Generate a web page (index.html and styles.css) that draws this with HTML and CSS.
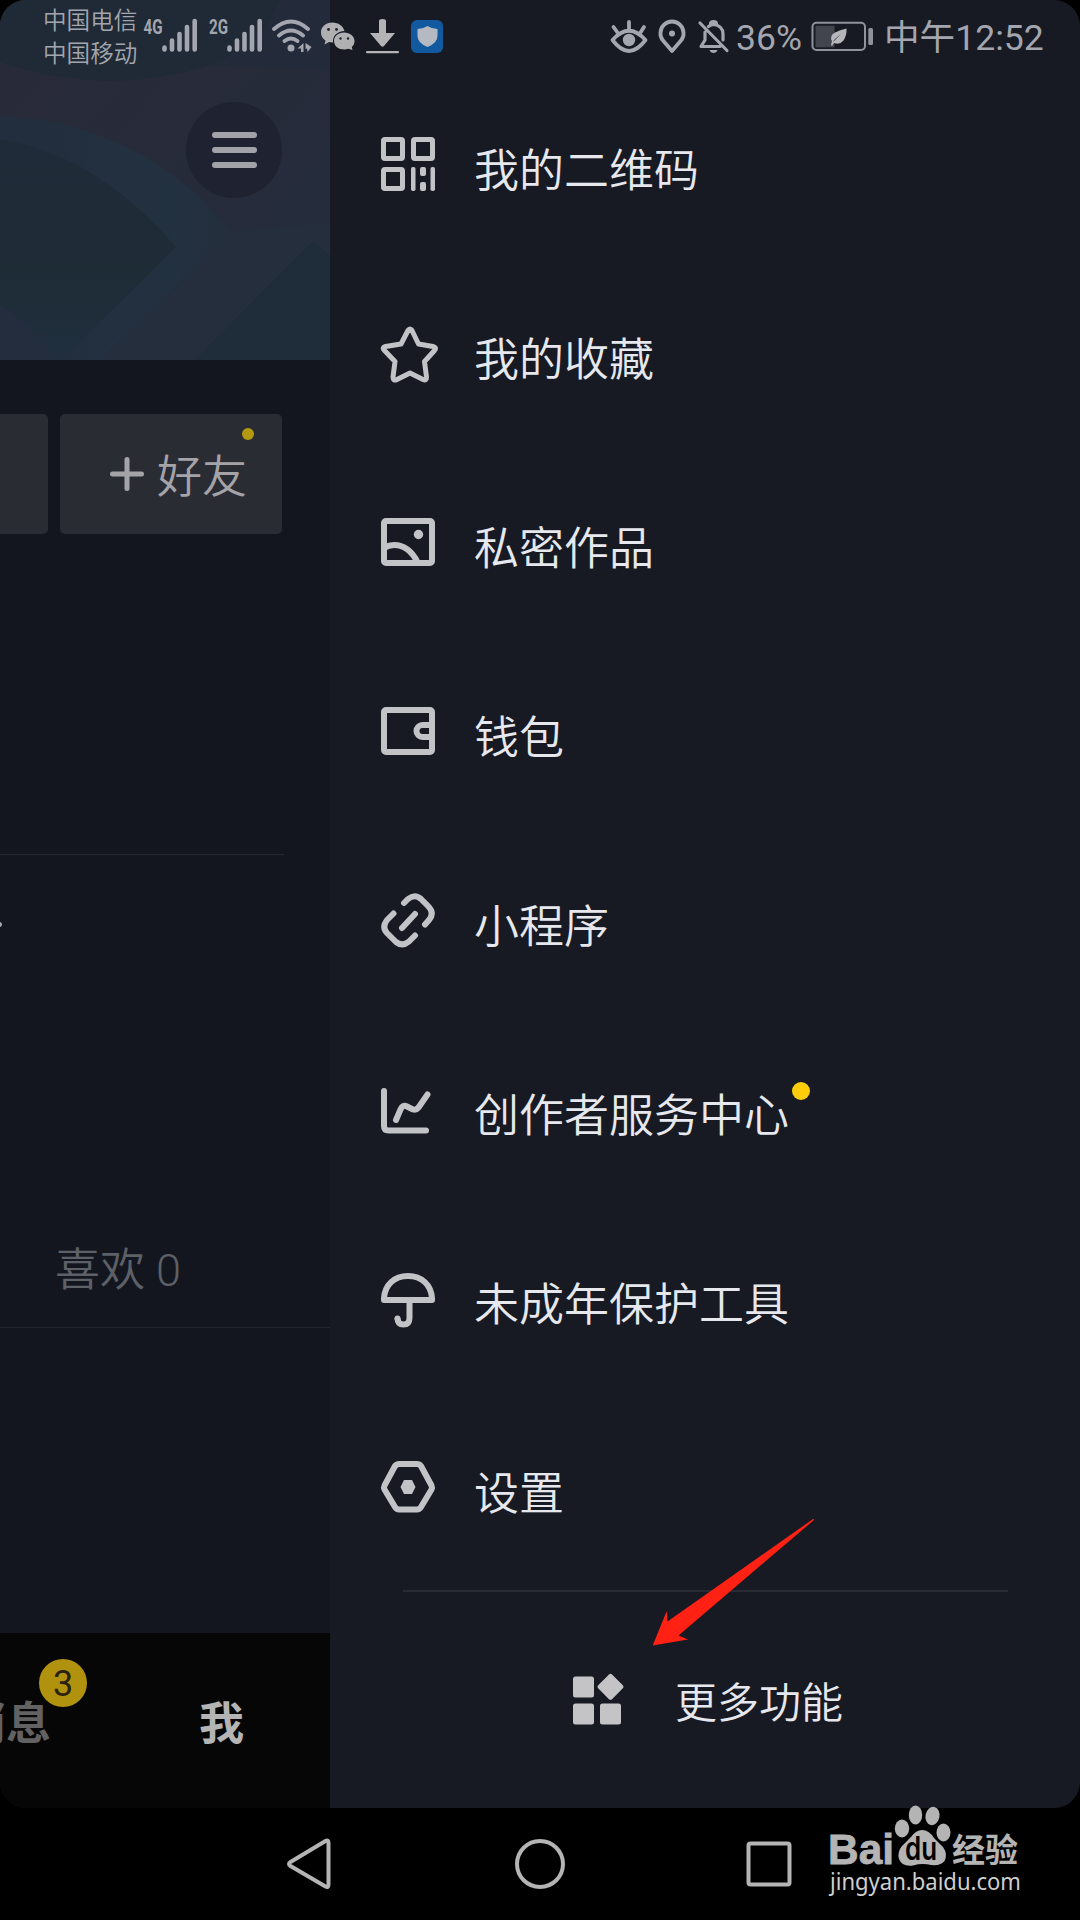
FILE: index.html
```html
<!DOCTYPE html>
<html lang="zh-CN">
<head>
<meta charset="utf-8">
<title>更多功能</title>
<link rel="stylesheet" href="styles.css">
</head>
<body>
<div class="screen">
  <div class="app">
    <header class="status">
      <div class="carriers"><span>中国电信</span><span>中国移动</span></div>
      <svg class="signal" viewBox="143 12 56 44"><text class="net" x="143.500" y="34" textLength="19" lengthAdjust="spacingAndGlyphs">4G</text><path class="bars" d="M164.500 47.500V49.500M172 40.500V49.500M179.500 34V49.500M187 27V49.500M194.700 21V49.500"/></svg>
      <svg class="signal second" viewBox="208 12 56 44"><text class="net" x="209" y="34" textLength="19" lengthAdjust="spacingAndGlyphs">2G</text><path class="bars" d="M229.500 47.500V49.500M237 40.500V49.500M244.500 34V49.500M252 27V49.500M259.700 21V49.500"/></svg>
      <svg class="wifi" viewBox="270 12 44 44"><path class="stroke" d="M274 29Q291 14 308 29M279 35.500Q291 25.500 303 35.500M284.500 41Q291 36 297.500 41"/><circle cx="291" cy="48" r="3.500"/><path d="M303.500 43V52H301V48.500H297.500ZM305.500 43L311.500 47L307.500 52L307 48.500L305.500 49Z"/></svg>
      <svg class="wechat" viewBox="320 12 36 44"><path d="M332.500 22.500C325.500 22.500 321 27 321 32.500C321 36 322.800 38.800 325.500 40.500L324.500 44.500L329 42Q331 42.600 333 42.400C332.500 35.500 337.500 31.200 344.500 31C343 26 338.500 22.500 332.500 22.500Z"/><path d="M344 32.500C338 32.500 334 36.300 334 41C334 46 338.500 49.500 344.500 49.500Q346.500 49.500 348.500 48.800L352.500 50L351.800 47C353.500 45.500 354.500 43.500 354.500 41C354.500 36.300 350 32.500 344 32.500Z"/><g class="eyes"><circle cx="328.500" cy="29.500" r="1.400"/><circle cx="336.500" cy="29.500" r="1.400"/><circle cx="340.500" cy="38.500" r="1.200"/><circle cx="348" cy="38.500" r="1.200"/></g></svg>
      <svg class="download" viewBox="365 12 36 44"><path d="M379 21Q379 19 382.500 19T386 21V33H395L384 46Q382.500 47.500 381 46L370 33H379Z"/><rect x="366" y="51" width="33" height="2.200" rx="1"/></svg>
      <svg class="guard" viewBox="410 12 34 44"><rect class="tile" x="411" y="20" width="32" height="33" rx="6"/><path d="M427.500 26Q432 29 437.500 29V36Q437.500 43 427.500 47Q417.500 43 417.500 36V29Q423 29 427.500 26Z"/></svg>
      <svg class="eye" viewBox="610 12 38 44"><path class="stroke" d="M612.500 40Q629 21.500 645.500 40Q629 62 612.500 40ZM629 22V29M613.500 27L617.500 32.500M644 27L640.500 32.500"/><circle cx="629" cy="40" r="6.200"/></svg>
      <svg class="pin" viewBox="657 12 30 44"><path class="stroke" d="M672 51L663 40.500C660 37 660.500 33 660.500 33A11.500 11.500 0 0 1 683.500 33C683.500 33 684 37 681 40.500Z"/><circle cx="672" cy="33.500" r="3"/></svg>
      <svg class="bell" viewBox="697 12 34 44"><path class="stroke thin" d="M700 23L727 50.500M705 32V40L701 46.500H720M708.500 26.500Q711 24.500 713.500 24.500Q723 25.500 723 34V40M710.500 24Q710.500 21.500 713.500 21.500T716.500 24"/><path d="M709.500 50H717.500Q716.500 53 713.500 53T709.500 50Z"/></svg>
      <span class="percent">36%</span>
      <svg class="battery" viewBox="811 12 64 44"><rect class="case" x="812.500" y="22.800" width="52.500" height="27.200" rx="4"/><rect class="level" x="815.500" y="25.800" width="19" height="21.500"/><path class="leaf" d="M831 45L832 41Q829 36 835 32.500Q840 30 846.500 28.500Q847 35 843.500 40.500Q839.500 45.500 834 43L832 46ZM833 42L841 34L834 40Z"/><rect class="cap" x="868.300" y="28" width="4.700" height="17" rx="1.500"/></svg>
      <span class="clock">中午12:52</span>
    </header>

    <main class="profile">
      <section class="cover">
        <svg class="art" viewBox="0 0 330 360">
          <defs>
            <linearGradient id="base" x1="0" y1="0" x2="1" y2="1"><stop offset="0" stop-color="#292a38"/><stop offset=".55" stop-color="#262b3a"/><stop offset="1" stop-color="#242e3d"/></linearGradient>
            <linearGradient id="disc" x1="0" y1="0" x2="0" y2="1"><stop offset="0" stop-color="#202b39"/><stop offset=".6" stop-color="#1e2c36"/><stop offset="1" stop-color="#202f3e"/></linearGradient>
            <linearGradient id="edge" x1="0" y1="0" x2="1" y2="0"><stop offset="0" stop-color="#222d3d"/><stop offset=".7" stop-color="#223140"/><stop offset="1" stop-color="#242e3d"/></linearGradient>
          </defs>
          <rect width="330" height="360" fill="url(#base)"/>
          <path d="M0 0H280Q270 45 210 65Q150 84 90 80Q40 76 0 62Z" fill="#1f2a36"/>
          <path d="M280 0H330V70L210 65Q262 45 280 0Z" fill="#232b3a"/>
          <path d="M0 116Q75 118 145 157Q195 187 232 232L105 360H0Z" fill="url(#edge)"/>
          <path d="M165 296L232 232L330 222V360H100Z" fill="#242e3d"/>
          <path d="M0 139Q58 149 105 182Q145 210 176 247L62 360H0Z" fill="url(#disc)"/>
          <path d="M313 241L330 256V360H195Z" fill="#1f2d3a"/>
          <path d="M0 305Q30 324 56 360H0Z" fill="#242d3e"/>
        </svg>
        <div class="menu-button"><i></i><i></i><i></i></div>
      </section>
      <section class="actions">
        <div class="button cut"></div>
        <div class="button friend">
          <svg class="plus" viewBox="0 0 34 34"><path d="M17 2.500V31.500M2.500 17H31.500"/></svg>
          <span>好友</span><b class="dot"></b>
        </div>
      </section>
      <section class="bio"><i class="period"></i></section>
      <section class="tabs"><span>喜欢 0</span></section>
      <nav class="bottom-tabs">
        <div class="messages">消息<b class="badge">3</b></div>
        <div class="me">我</div>
      </nav>
    </main>

    <aside class="drawer">
      <ul class="menu">
        <li><svg class="icon" viewBox="0 0 60 60"><g class="line w5"><rect x="5.500" y="5.500" width="19" height="19" rx="1.500"/><rect x="35.500" y="5.500" width="19" height="19" rx="1.500"/><rect x="5.500" y="35.500" width="19" height="19" rx="1.500"/></g><g class="fill"><rect x="33" y="33" width="4.500" height="24" rx="1.800"/><rect x="52.500" y="33" width="4.500" height="24" rx="1.800"/><rect x="42" y="33" width="6" height="9" rx="2"/><rect x="42" y="48" width="6" height="9" rx="2"/></g></svg><span>我的二维码</span></li>
        <li><svg class="icon" viewBox="0 0 60 60"><path class="line w5" d="M30 7.500Q32 4.500 34 7.500L40.500 21L55 23.500Q59 24.500 56.500 27.500L46.500 38.500L48.500 54Q48.500 58 45 56.500L32 50L19 56.500Q15 58.500 15 54L17 38.500L6.500 27.500Q3.500 24.500 7.500 23.500L23 21Z"/></svg><span>我的收藏</span></li>
        <li><svg class="icon" viewBox="0 0 60 60"><rect class="line w6" x="6" y="9" width="48" height="42" rx="2"/><path class="line w6" d="M6 36Q11 33 16 33C26 33 34 39 40 51"/><circle class="fill" cx="40.500" cy="22.500" r="4.700"/></svg><span>私密作品</span></li>
        <li><svg class="icon" viewBox="0 0 60 60"><rect class="line w6" x="6" y="9" width="48" height="42" rx="2"/><path class="line w6" d="M54 27H44.500A6 6 0 0 0 44.500 39H54" transform="translate(0 -3)"/></svg><span>钱包</span></li>
        <li><svg class="icon" viewBox="0 0 60 60"><path class="line w6 round" d="M26 13L30 9Q37 3.500 43 9L50 16Q57 23 51 30L47 34.500M15.500 23.500L9 30Q3.500 37 9 43L18 52Q24.500 57 31 51.500L37 45.500M24 38L37 24"/></svg><span>小程序</span></li>
        <li><svg class="icon" viewBox="0 0 60 60"><path class="line w6 round" d="M6 12V47Q6 51.500 10.500 51.500H48M18 41L22.500 30.500Q25 25 29 27.500L35 30.500Q38 31.500 40.500 28.500L49.500 15.500"/></svg><span>创作者服务中心<b class="dot"></b></span></li>
        <li><svg class="icon" viewBox="0 0 60 60"><g transform="translate(0 2)"><path class="line w6" d="M6 30V28C7 15 16 6 30 6S53 15 54 28V30ZM31.500 30V48Q31.500 54.500 25.500 54.500T19.500 48"/><circle class="fill" cx="19.500" cy="48.500" r="3"/></g></svg><span>未成年保护工具</span></li>
        <li><svg class="icon" viewBox="0 0 60 60"><path class="line w6" d="M19 7.500Q20 7 21 7H39Q41.500 7 43 9L53.500 28.500Q54.500 30.500 53.500 32.500L43 50Q41.500 52.500 39 52.500H21Q18.500 52.500 17 50L6.500 32.500Q5.500 30.500 6.500 28.500L17 9Z"/><path class="fill" d="M26 23H34L37.500 30L34 37H26L22.500 30Z"/></svg><span>设置</span></li>
      </ul>
      <div class="more">
        <svg class="grid" viewBox="0 0 52 52"><g><rect x="0" y="3.500" width="21" height="21" rx="2.500"/><rect x="0" y="30.500" width="21" height="21" rx="2.500"/><rect x="27" y="30.500" width="21" height="21" rx="2.500"/><rect x="27.700" y="4" width="19.600" height="19.600" rx="2.500" transform="rotate(45 37.500 13.800)"/></g></svg>
        <span>更多功能</span>
      </div>
    </aside>
  </div>

  <nav class="system-nav">
    <svg viewBox="0 0 60 60"><path d="M45.500 7Q48.500 5.500 48.500 9V50.500Q48.500 54 45.500 52.500L10.500 32Q7.500 30 10.500 28Z"/></svg>
    <svg viewBox="0 0 60 60"><circle cx="30" cy="30" r="23"/></svg>
    <svg viewBox="0 0 60 60"><rect x="8.500" y="9.500" width="41" height="41" rx="2"/></svg>
  </nav>

  <svg class="arrow" viewBox="650 1515 170 135"><path d="M652.700 1645.500L666.700 1611L667.500 1621.500L813 1519Q814.500 1518.500 814 1520L678.500 1635.500L688 1639.500Z"/></svg>

  <svg class="watermark" viewBox="820 1800 210 105">
    <text class="brand" x="828" y="1864" textLength="66" lengthAdjust="spacingAndGlyphs">Bai</text>
    <ellipse cx="902" cy="1828.500" rx="7.200" ry="9"/><ellipse cx="915.500" cy="1815" rx="6.700" ry="9.500"/><ellipse cx="932.500" cy="1816" rx="7" ry="9.200" transform="rotate(12 932.500 1816)"/><ellipse cx="943.500" cy="1832.500" rx="7" ry="9"/>
    <path d="M922 1830Q929 1830 934 1838L943 1847Q948 1854 944.500 1861Q941 1866 931 1865Q922 1863 913 1865.500Q902 1867 899 1859Q897 1852 902 1846L911 1837Q916 1830 922 1830Z"/>
    <text class="du" x="905" y="1860" textLength="32" lengthAdjust="spacingAndGlyphs">du</text>
    <text class="cn" x="952" y="1862" textLength="66" lengthAdjust="spacingAndGlyphs">经验</text>
    <text class="url" x="830" y="1890" textLength="191" lengthAdjust="spacingAndGlyphs">jingyan.baidu.com</text>
  </svg>
</div>
</body>
</html>
```
FILE: styles.css
```css
* { box-sizing: border-box; }
body { margin: 0; background: #000; font-family: Roboto, "Noto Sans CJK SC", sans-serif; }
svg { display: block; flex: none; }
i, b { font-style: normal; font-weight: 400; }

.screen { position: relative; width: 1080px; height: 1920px; overflow: hidden; display: flex; flex-direction: column; }
.app { position: relative; display: flex; height: 1808px; border-radius: 26px; overflow: hidden; }

/* Status bar, laid over both panels */
.status { position: absolute; z-index: 2; top: 0; left: 0; width: 1080px; height: 72px; padding-left: 43px; display: flex; color: #a3a6ae; fill: #a3a6ae; }
.status svg { height: 44px; margin-top: 12px; }
.carriers { width: 100px; padding-top: 5px; display: flex; flex-direction: column; font-size: 23.6px; line-height: 33px; font-weight: 350; white-space: nowrap; }
.stroke { fill: none; stroke: #a3a6ae; stroke-width: 3.8; stroke-linecap: round; stroke-linejoin: round; }
.thin { stroke-width: 3.2; }
.signal { width: 56px; }
.second { margin-left: 9px; }
.net { font: 700 20px Roboto, sans-serif; }
.bars { fill: none; stroke: #a3a6ae; stroke-width: 4.6; stroke-linecap: round; }
.wifi { width: 44px; margin-left: 6px; }
.wechat { width: 36px; margin-left: 6px; fill: #b0b0b2; }
.eyes { fill: #22242d; }
.download { width: 36px; margin-left: 9px; fill: #b4b4b6; }
.guard { width: 34px; margin-left: 9px; fill: #b5b9c2; }
.tile { fill: #115a9f; }
.eye { width: 38px; margin-left: 166px; }
.pin { width: 30px; margin-left: 9px; }
.bell { width: 34px; margin-left: 10px; }
.percent { width: 75px; margin-left: 5px; font-size: 35.5px; line-height: 76px; white-space: nowrap; }
.battery { width: 64px; }
.case { fill: none; stroke: #8f929a; stroke-width: 2; }
.level { fill: #42454e; }
.cap { fill: #8f929a; }
.leaf { fill: #b4b6ba; fill-rule: evenodd; }
.clock { margin-left: 9px; font-size: 35.6px; line-height: 76px; white-space: nowrap; }

/* Profile page pushed to the left */
.profile { width: 330px; height: 1808px; background: #13161e; display: flex; flex-direction: column; overflow: hidden; flex: none; }
.cover { display: grid; height: 360px; flex: none; }
.art { grid-area: 1 / 1; width: 330px; height: 360px; }
.menu-button { grid-area: 1 / 1; width: 96px; height: 96px; margin: 102px 0 0 186px; border-radius: 50%; background: #1f2230; display: flex; flex-direction: column; align-items: center; justify-content: center; gap: 9px; }
.menu-button i { width: 45px; height: 6px; border-radius: 3px; background: #a2a3a9; }
.actions { display: flex; gap: 12px; margin-top: 54px; height: 120px; flex: none; }
.button { background: #2a2c34; border-radius: 5px; }
.cut { width: 48px; border-radius: 0 5px 5px 0; }
.friend { position: relative; width: 222px; display: flex; align-items: center; padding-left: 50px; color: #a4a3a8; font-size: 45px; font-weight: 350; }
.friend span { margin: 7px 0 0 13px; line-height: 60px; }
.plus { width: 34px; height: 34px; fill: none; stroke: #a4a3a8; stroke-width: 5; stroke-linecap: round; }
.dot { position: absolute; border-radius: 50%; }
.friend .dot { left: 182px; top: 14px; width: 12px; height: 12px; background: #b3990f; }
.bio { position: relative; width: 284px; height: 321px; flex: none; border-bottom: 1px solid #24272f; }
.period { position: absolute; left: -3px; top: 388px; width: 5px; height: 5px; border-radius: 50%; background: #a8aab0; }
.tabs { height: 473px; flex: none; border-bottom: 1px solid #22252d; display: flex; align-items: flex-end; padding: 0 0 23px 55px; color: #5d6067; font-size: 45px; line-height: 66px; font-weight: 350; }
.bottom-tabs { margin-top: auto; height: 175px; flex: none; background: #060606; display: flex; align-items: center; padding-top: 8px; font-size: 45px; font-weight: 700; line-height: 60px; }
.messages { position: relative; width: 90px; margin-left: -39px; color: #626262; white-space: nowrap; }
.me { margin-left: 148px; color: #b4b4b4; }
.badge { position: absolute; left: 78px; top: -36px; width: 48px; height: 48px; border-radius: 50%; background: #b1920f; color: #2a220f; font-size: 36px; line-height: 51px; text-align: center; }

/* Side drawer */
.drawer { flex: 1; background: #171a23; padding-top: 69px; display: flex; flex-direction: column; }
.menu { list-style: none; margin: 0; padding: 0 0 9px; }
.menu li { height: 189px; padding-left: 48px; display: flex; align-items: center; color: #e6e8ee; font-size: 45px; font-weight: 350; }
.menu span { position: relative; margin: 16px 0 0 36px; line-height: 66px; white-space: nowrap; }
.icon { width: 60px; height: 60px; }
.menu .dot { left: 318px; top: -2px; width: 18px; height: 18px; background: #fdcd0b; }
.line { fill: none; stroke: #c1c3c6; stroke-linejoin: round; }
.fill { fill: #c1c3c6; }
.w5 { stroke-width: 5; }
.w6 { stroke-width: 6; }
.round { stroke-linecap: round; }
.more { margin: 0 72px 0 73px; border-top: 2px solid #282b33; padding: 77px 0 0 170px; height: 139px; display: flex; align-items: center; color: #e6e8ee; font-size: 42px; line-height: 60px; font-weight: 350; }
.grid { width: 52px; height: 52px; fill: #c4c4c6; }
.more span { margin: 9px 0 0 50px; }

.system-nav { height: 112px; background: #000; display: flex; align-items: center; gap: 170px; padding-left: 280px; }
.system-nav svg { width: 60px; height: 60px; fill: none; stroke: #b4b4b4; stroke-width: 4; stroke-linejoin: round; }

/* Annotation and site mark, over the page */
.arrow { position: absolute; left: 650px; top: 1515px; width: 170px; height: 135px; fill: #ff2113; }
.watermark { position: absolute; left: 820px; top: 1800px; width: 210px; height: 105px; fill: #b4b4b4; }
.brand { font: 700 42px "Liberation Sans", sans-serif; stroke: #b4b4b4; stroke-width: .8; }
.du { font: 600 32px Inter, sans-serif; fill: #000; }
.cn { font: 700 33px "Noto Sans CJK SC", sans-serif; }
.url { font: 400 24px "Noto Sans", sans-serif; fill: #cfcfcf; }
```
